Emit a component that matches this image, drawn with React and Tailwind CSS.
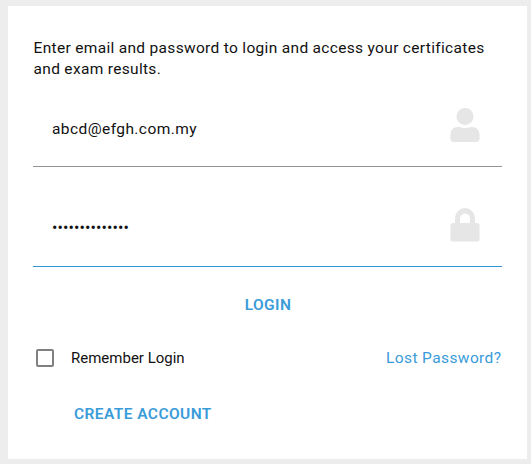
import React, { useState } from 'react';

const UserIcon = () => (
    <svg viewBox="0 0 30 34" className="h-[34px] w-[30px] fill-[#e6e6e6]" aria-hidden="true">
        <circle cx="15" cy="8.5" r="8.5" />
        <path d="M9 19q6 2 12 0h1.500a7 7 0 0 1 7 7v4.500a3.500 3.500 0 0 1-3.500 3.500H4a3.500 3.500 0 0 1-3.500-3.500V26a7 7 0 0 1 7-7Z" />
    </svg>
);

const LockIcon = () => (
    <svg viewBox="0 0 30 34" className="h-[34px] w-[30px] fill-[#e6e6e6]" aria-hidden="true">
        <path fillRule="evenodd" d="M3 15h2V10a10 10 0 0 1 20 0v5h2a2.500 2.500 0 0 1 2.500 2.500v13.500a2.500 2.500 0 0 1-2.500 2.500H3a2.500 2.500 0 0 1-2.500-2.500V17.500A2.500 2.500 0 0 1 3 15Zm7 0h10V10.500a5 5 0 0 0-10 0Z" />
    </svg>
);

const App = () => {
    const [email, setEmail] = useState('abcd@efgh.com.my');
    const [password, setPassword] = useState('password123456');
    const [remember, setRemember] = useState(false);

    return (
        <div className="h-screen bg-[#ededed] pt-[6px] pr-[4px] pb-[5px] pl-[8px] font-['Roboto',sans-serif] text-[#111111]">
            <form className="flex h-full flex-col bg-white pt-[32px] pr-[25px] pl-[25px]" onSubmit={e => e.preventDefault()}>
                <p className="pl-[0.5px] text-[15.5px] leading-[21px] tracking-[0.32px]">
                    Enter email and password to login and access your certificates and exam results.
                </p>

                <label className="flex h-[87px] items-start justify-between border-b border-[#949494] pt-[28px] pr-[21.6px] pl-[19px]">
                    <input
                        type="text"
                        value={email}
                        onChange={e => setEmail(e.target.value)}
                        className="mt-[9px] h-[24px] w-[320px] bg-transparent text-[15.5px] tracking-[0.42px] outline-none"
                    />
                    <UserIcon />
                </label>

                <label className="flex h-[100px] items-start justify-between border-b border-[#2f97d6] pt-[41px] pr-[21.6px] pl-[19px]">
                    <input
                        type="password"
                        value={password}
                        onChange={e => setPassword(e.target.value)}
                        className="mt-[8px] h-[24px] w-[320px] bg-transparent text-base tracking-[0.1px] outline-none"
                    />
                    <LockIcon />
                </label>

                <button type="submit" className="mt-[27px] self-center pl-px text-[15.5px] leading-[22px] font-semibold tracking-[0.42px] text-[#3a9bd9]">
                    LOGIN
                </button>

                <div className="mt-[31px] flex h-[22px] items-center justify-between">
                    <label className="flex items-center gap-[17px] pl-[3px] text-[15px]">
                        <input
                            type="checkbox"
                            checked={remember}
                            onChange={e => setRemember(e.target.checked)}
                            className="size-[18px] appearance-none rounded-[2px] border-2 border-[#808080] checked:bg-[#2f97d6]"
                        />
                        Remember Login
                    </label>
                    <a href="#" className="pt-px pr-[0.5px] text-[15.5px] tracking-[0.4px] text-[#3a9bd9]">Lost Password?</a>
                </div>

                <button type="button" className="mt-[34px] ml-[41px] self-start text-[15.5px] leading-[22px] font-semibold tracking-[0.42px] text-[#3a9bd9]">
                    CREATE ACCOUNT
                </button>
            </form>
        </div>
    );
};

export default App;
